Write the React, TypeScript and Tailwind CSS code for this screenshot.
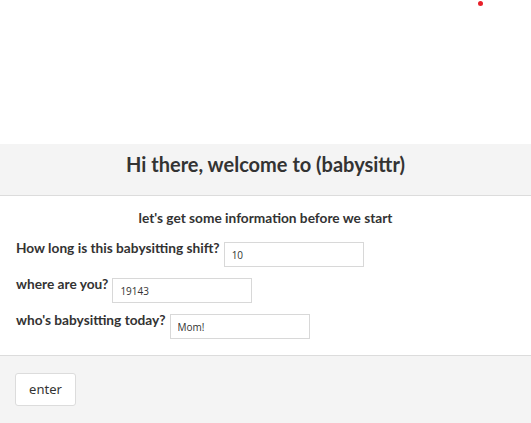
export default function App() {
  return (
    <main className="relative min-h-[423px] bg-white font-['Lato',sans-serif] text-[#333]">
      <div className="absolute left-[478px] top-[1px] h-[5px] w-[5px] rounded-full bg-[#e8202a]" />

      <div className="h-[144px]" />

      <header className="flex h-[52px] justify-center border-b border-[#dcdcdc] bg-[#f4f4f4] pt-[8px]">
        <h1 className="text-[20px] font-bold leading-[24px]">Hi there, welcome to (babysittr)</h1>
      </header>

      <section className="px-4 pb-4 pt-[12px]">
        <p className="text-center text-[13.7px] font-bold leading-[20px]">
          let's get some information before we start
        </p>

        <div className="mt-[11px] flex flex-col gap-[8px]">
          <Row label="How long is this babysitting shift?" value="10" />
          <Row label="where are you?" value="19143" />
          <Row label="who's babysitting today?" value="Mom!" />
        </div>
      </section>

      <footer className="h-[68px] border-t border-[#dcdcdc] bg-[#f4f4f4] px-[15px] pt-[17px]">
        <button className="h-[33px] w-[61px] rounded-[3px] border border-[#dcdcdc] bg-white text-[13px] font-['Noto_Sans',sans-serif]">
          enter
        </button>
      </footer>
    </main>
  );
}

function Row({ label, value }: { label: string; value: string }) {
  return (
    <div className="flex items-start">
      <label className="pt-[1px] text-[13.7px] font-bold leading-[16px]">{label}</label>
      <input
        className="ml-[4px] mt-[3px] h-[25px] w-[140px] border border-[#d8d8d8] px-[7px] font-['Open_Sans',sans-serif] text-[10px] text-[#333] outline-none"
        defaultValue={value}
      />
    </div>
  );
}
